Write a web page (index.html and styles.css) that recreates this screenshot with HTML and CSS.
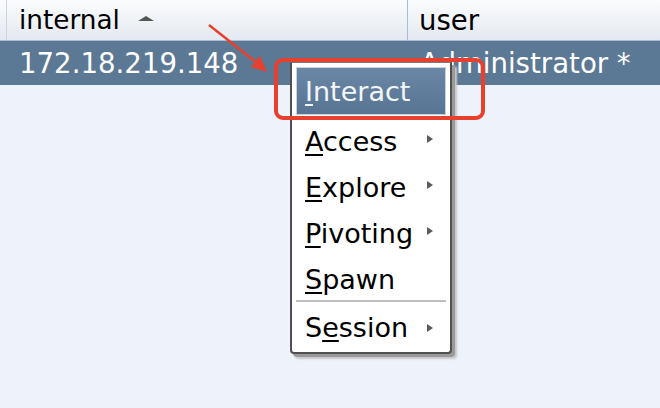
FILE: index.html
```html
<!DOCTYPE html>
<html>
<head>
<meta charset="utf-8">
<link rel="stylesheet" href="styles.css">
</head>
<body>
<div class="table">
  <div class="thead">
    <div class="edge"></div>
    <div class="th col-internal">internal <span class="sort"></span></div>
    <div class="th col-user">user</div>
  </div>
  <div class="row selected">
    <div class="edge"></div>
    <div class="td col-internal">172.18.219.148</div>
    <div class="td col-user">Administrator *</div>
  </div>
</div>

<div class="menu">
  <div class="item active"><span><u>I</u>nteract</span></div>
  <div class="item"><span><u>A</u>ccess</span><i class="sub"></i></div>
  <div class="item"><span><u>E</u>xplore</span><i class="sub"></i></div>
  <div class="item"><span><u>P</u>ivoting</span><i class="sub"></i></div>
  <div class="item"><span><u>S</u>pawn</span></div>
  <div class="sep"></div>
  <div class="item last"><span>S<u>e</u>ssion</span><i class="sub"></i></div>
</div>

<div class="highlight-box"></div>

<svg class="arrow" width="660" height="408" viewBox="0 0 660 408">
  <line x1="209" y1="25" x2="257" y2="63" stroke="#e8402e" stroke-width="2.5"/>
  <polygon points="267,72 251,67 260,56" fill="#e8402e"/>
</svg>
</body>
</html>
```
FILE: styles.css
```css
html, body {
  margin: 0;
  padding: 0;
}
body {
  width: 660px;
  height: 408px;
  background: #eef2fa;
  font-family: "DejaVu Sans", sans-serif;
  font-size: 27px;
  overflow: hidden;
  position: relative;
}
.table {
  display: flex;
  flex-direction: column;
}
.thead {
  display: flex;
  height: 40px;
  background: linear-gradient(#fbfcfd, #e4e9f0);
  border-bottom: 1px solid #a8bdd3;
}
.edge {
  width: 6px;
  flex: none;
  border-right: 1px solid #c9d5e3;
}
.row .edge {
  border-right: none;
  width: 7px;
}
.th {
  display: flex;
  align-items: center;
  color: #000;
  box-sizing: border-box;
  height: 40px;
}
.th.col-internal {
  width: 401px;
  padding-left: 12px;
  border-right: 1px solid #a8bdd3;
  font-size: 26.3px;
}
.th.col-user {
  padding-left: 11px;
  font-size: 27.5px;
}
.sort {
  display: inline-block;
  width: 0;
  height: 0;
  border-left: 8px solid transparent;
  border-right: 8px solid transparent;
  border-bottom: 5px solid #555;
  margin-left: 18px;
  margin-top: -4px;
}
.row {
  display: flex;
  height: 44px;
  align-items: center;
  font-size: 27.6px;
}
.row.selected {
  background: #5b7895;
  color: #fff;
}
.td.col-internal {
  width: 401px;
  padding-left: 12px;
  box-sizing: border-box;
}
.td.col-user {
  padding-left: 12px;
}
.menu {
  position: absolute;
  left: 290px;
  top: 62px;
  width: 150px;
  height: 285px;
  background: #fff;
  border: 2px solid #505050;
  border-top: 1px solid #7a7a7a;
  border-radius: 0 0 4px 4px;
  box-shadow: 3px 3px 0 #9a9a9a, 5px 5px 2px #c8c8c8;
  padding: 4px 4px 0 4px;
  display: flex;
  flex-direction: column;
}
.item {
  height: 46px;
  display: flex;
  align-items: center;
  justify-content: space-between;
  padding: 6px 13px 0 9px;
  color: #000;
  flex: none;
  box-sizing: border-box;
}
.item.last {
  padding-top: 0;
}
.item u {
  text-decoration-thickness: 2px;
  text-underline-offset: 3px;
}
.item.active {
  height: 48px;
  padding: 0 12px 0 8px;
  background: linear-gradient(#6a88a6, #577593);
  border: 1px solid #c9d3de;
  color: #f3f6f9;
}
.sub {
  width: 0;
  height: 0;
  border-top: 4px solid transparent;
  border-bottom: 4px solid transparent;
  border-left: 6px solid #5a5a5a;
  margin-top: -4px;
}
.item.last .sub {
  margin-top: 2px;
}
.sep {
  height: 2px;
  background: #c0c0c0;
  margin: 1px 0 2px 0;
  flex: none;
}
.highlight-box {
  position: absolute;
  left: 274px;
  top: 58px;
  width: 203px;
  height: 54px;
  border: 4px solid #e8402e;
  border-radius: 9px;
}
.arrow {
  position: absolute;
  left: 0;
  top: 0;
}
```
